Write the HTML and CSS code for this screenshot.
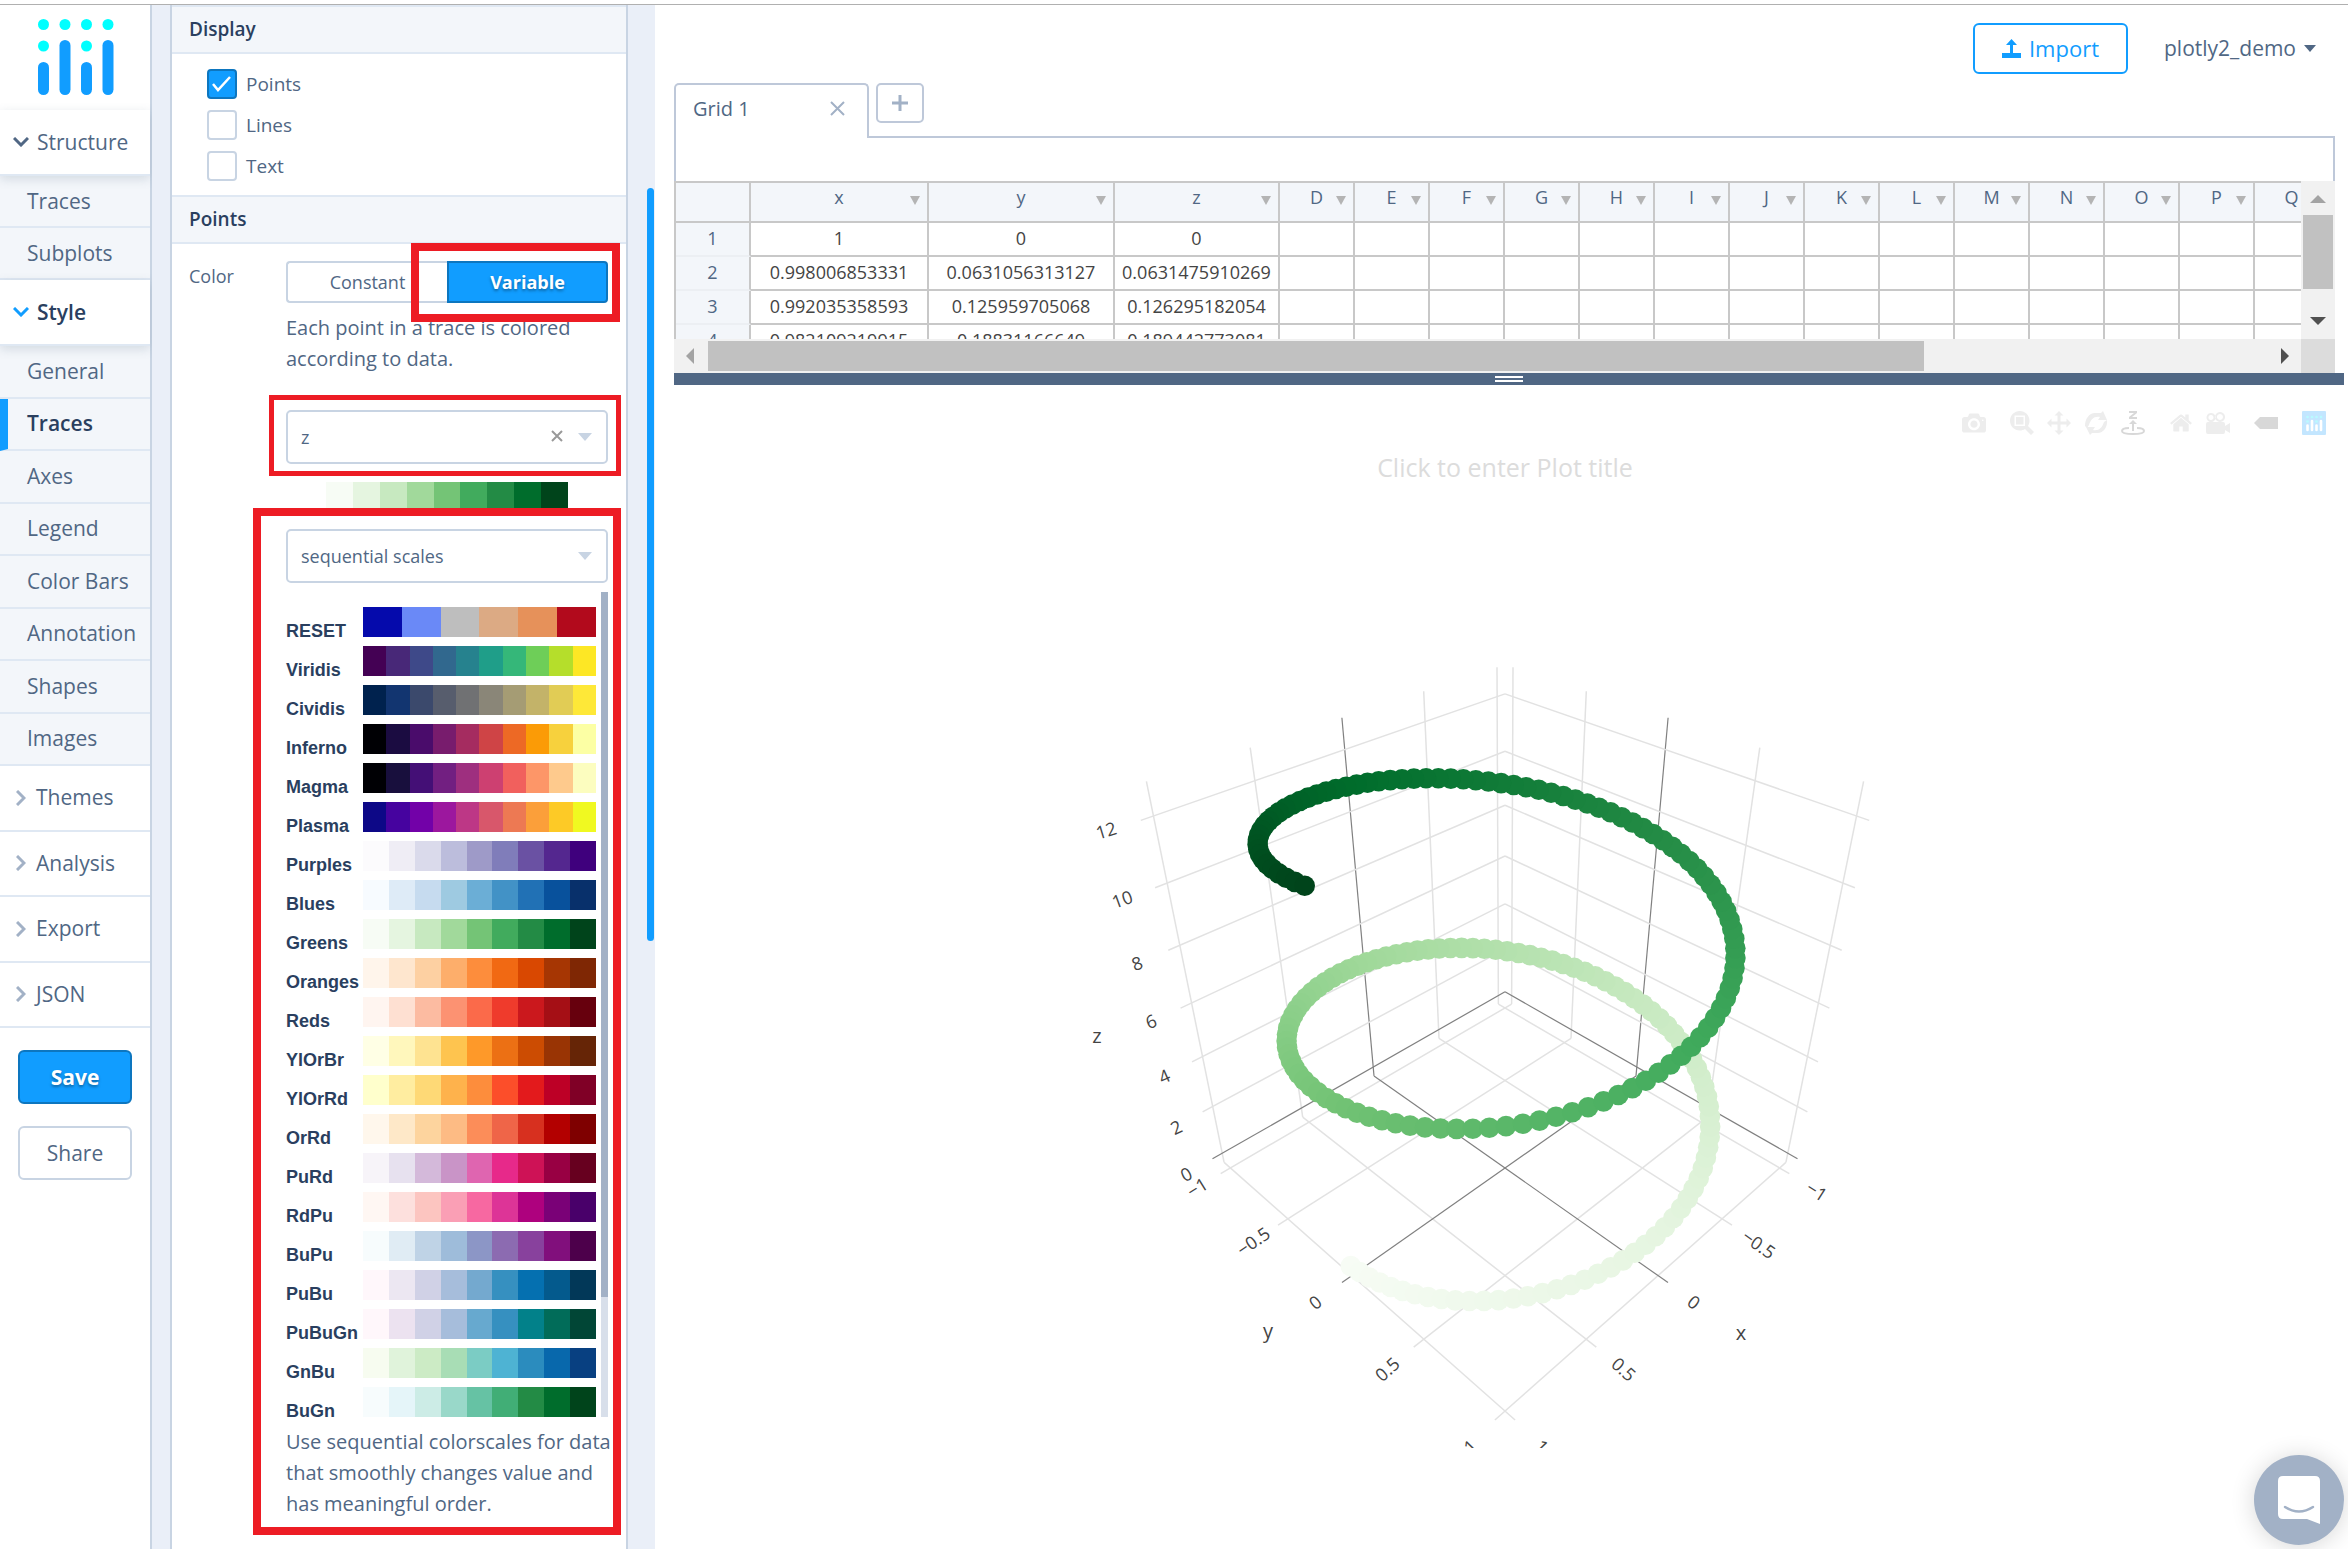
FILE: index.html
```html
<!DOCTYPE html>
<html lang="en">
<head>
<meta charset="utf-8">
<title>Chart Studio</title>
<link rel="stylesheet" href="styles.css">
</head>
<body>
<div class="app">
  <aside class="sidebar">
    <div class="logo">
      <svg width="76" height="76" viewBox="0 0 76 76" aria-label="Plotly">
        <g fill="#0ff"><circle cx="5.500" cy="5.500" r="5.500"/><circle cx="27" cy="5.500" r="5.500"/><circle cx="48.500" cy="5.500" r="5.500"/><circle cx="70" cy="5.500" r="5.500"/><circle cx="5.500" cy="27" r="5.500"/><circle cx="48.500" cy="27" r="5.500"/></g>
        <g fill="#119dff"><rect y="43" width="11" height="33" rx="5.500"/><rect x="21.500" y="21" width="11" height="55" rx="5.500"/><rect x="43" y="43" width="11" height="33" rx="5.500"/><rect x="64.500" y="21" width="11" height="55" rx="5.500"/></g>
      </svg>
    </div>
    <nav>
      <a class="group open" href="#structure"><svg width="16" height="10" viewBox="0 0 16 10"><path d="M1 1l7 7 7-7"/></svg>Structure</a>
      <div class="items two">
        <a href="#s-traces">Traces</a><a href="#subplots">Subplots</a>
      </div>
      <a class="group open active" href="#style"><svg width="16" height="10" viewBox="0 0 16 10"><path d="M1 1l7 7 7-7"/></svg>Style</a>
      <div class="items eight">
        <a href="#general">General</a><a class="current" href="#traces">Traces</a><a href="#axes">Axes</a><a href="#legend">Legend</a><a href="#colorbars">Color Bars</a><a href="#annotation">Annotation</a><a href="#shapes">Shapes</a><a href="#images">Images</a>
      </div>
      <div class="closed">
        <a class="group" href="#themes"><svg width="10" height="16" viewBox="0 0 10 16"><path d="M1 1l7 7-7 7"/></svg>Themes</a>
        <a class="group" href="#analysis"><svg width="10" height="16" viewBox="0 0 10 16"><path d="M1 1l7 7-7 7"/></svg>Analysis</a>
        <a class="group" href="#export"><svg width="10" height="16" viewBox="0 0 10 16"><path d="M1 1l7 7-7 7"/></svg>Export</a>
        <a class="group" href="#json"><svg width="10" height="16" viewBox="0 0 10 16"><path d="M1 1l7 7-7 7"/></svg>JSON</a>
      </div>
    </nav>
    <div class="actions">
      <button class="btn primary">Save</button>
      <button class="btn">Share</button>
    </div>
  </aside>

  <div class="panel-wrap">
    <section class="panel">
      <h2>Display</h2>
      <div class="checks">
        <label><input type="checkbox" checked>Points</label>
        <label><input type="checkbox">Lines</label>
        <label><input type="checkbox">Text</label>
      </div>
      <h2>Points</h2>
      <div class="field">
        <span class="field-name">Color</span>
        <div class="field-body">
          <div class="toggle">
            <button>Constant</button><button class="on">Variable</button>
            <div class="mark mark-toggle"></div>
          </div>
          <p class="help">Each point in a trace is colored according to data.</p>
          <div class="picker column-picker">
            <select aria-label="Color column"><option>z</option></select>
            <button class="clear" aria-label="Clear"><svg width="12" height="12" viewBox="0 0 12 12"><path d="M1 1l10 10M11 1L1 11" stroke="#999" stroke-width="2"/></svg></button>
            <div class="mark mark-column"></div>
          </div>
          <div class="swatches current-scale" data-scale="Greens"></div>
          <div class="scales">
            <div class="picker"><select aria-label="Scale type"><option>sequential scales</option></select></div>
            <div class="scale-list">
              <div class="scale-rows" id="scales"></div>
              <div class="scale-track"><div class="scale-thumb"></div></div>
            </div>
            <p class="help">Use sequential colorscales for data that smoothly changes value and has meaningful order.</p>
            <div class="mark mark-scales"></div>
          </div>
        </div>
      </div>
    </section>
    <div class="panel-thumb"></div>
  </div>

  <main>
    <header>
      <button class="import"><svg width="19" height="19" viewBox="0 0 19 19"><path d="M0 14h19v5H0zM8 14V6H4l5.500-6L15 6h-4v8z" fill="#119dff"/></svg>Import</button>
      <button class="user">plotly2_demo<svg width="12" height="7" viewBox="0 0 12 7"><path d="M0 0h12L6 7z" fill="#506784"/></svg></button>
    </header>
    <div class="tabs">
      <div class="tab"><span>Grid 1</span><button aria-label="Close tab"><svg width="15" height="15" viewBox="0 0 15 15"><path d="M1 1l13 13M14 1L1 14" stroke="#a2b1c6" stroke-width="2"/></svg></button></div>
      <button class="add" aria-label="Add tab"><svg width="16" height="16" viewBox="0 0 16 16"><path d="M8 0v16M0 8h16" stroke="#a2b1c6" stroke-width="3"/></svg></button>
    </div>
    <div class="formula"></div>
    <div class="grid">
      <div class="cells"><table>
        <thead><tr id="heads"><th class="num"></th></tr></thead>
        <tbody id="rows"></tbody>
      </table></div>
      <div class="vbar" aria-hidden="true">
        <svg width="16" height="8" viewBox="0 0 16 8"><path d="M0 8h16L8 0z" fill="#a3a3a3"/></svg>
        <div class="vthumb"></div>
        <svg width="16" height="8" viewBox="0 0 16 8"><path d="M0 0h16L8 8z" fill="#505050"/></svg>
      </div>
      <div class="hbar" aria-hidden="true">
        <svg width="8" height="16" viewBox="0 0 8 16"><path d="M8 0v16L0 8z" fill="#a3a3a3"/></svg>
        <div class="hrun"><div class="hthumb"></div></div>
        <svg width="8" height="16" viewBox="0 0 8 16"><path d="M0 0v16l8-8z" fill="#505050"/></svg>
      </div>
      <div class="corner"></div>
    </div>
    <div class="splitter"><span></span></div>
    <div class="plot">
      <svg id="scene" viewBox="674 385 1670 1063" role="img" aria-label="3D helix scatter plot"></svg>
      <div class="modebar">
        <a href="#camera"><svg viewBox="0 0 1000 1000"><path transform="matrix(1 0 0 -1 0 850)" d="m500 450c-83 0-150-67-150-150 0-83 67-150 150-150 83 0 150 67 150 150 0 83-67 150-150 150z m400 150h-120c-16 0-34 13-39 29l-31 93c-6 15-23 28-40 28h-340c-16 0-34-13-39-28l-31-94c-6-15-23-28-40-28h-120c-55 0-100-45-100-100v-450c0-55 45-100 100-100h800c55 0 100 45 100 100v450c0 55-45 100-100 100z m-400-550c-138 0-250 112-250 250 0 138 112 250 250 250 138 0 250-112 250-250 0-138-112-250-250-250z m365 380c-19 0-35 16-35 35 0 19 16 35 35 35 19 0 35-16 35-35 0-19-16-35-35-35z"/></svg></a>
        <div>
          <a href="#zoom"><svg viewBox="0 0 1000 1000"><path transform="matrix(1 0 0 -1 0 850)" d="m1000-25l-250 251c40 63 63 138 63 218 0 224-182 406-407 406-224 0-406-182-406-406s183-406 407-406c80 0 155 22 218 62l250-250 125 125z m-812 250l0 438 437 0 0-438-437 0z m62 375l313 0 0-312-313 0 0 312z"/></svg></a>
          <a href="#pan"><svg viewBox="0 0 1000 1000"><path transform="matrix(1 0 0 -1 0 850)" d="m1000 350l-187 188 0-125-250 0 0 250 125 0-188 187-187-187 125 0 0-250-250 0 0 125-188-188 186-187 0 125 252 0 0-250-125 0 187-188 188 188-125 0 0 250 250 0 0-126 187 188z"/></svg></a>
          <a href="#orbit"><svg viewBox="0 0 24 24"><path d="M1 15C1 8 5 2 11 2h6l2-2 4 9h-9l2-3c-6-1-9 2-11 8l-2 3zM23 9c1 7-4 13-9 13H8l-2 2-4-8h9l-2 3c6 1 9-2 11-8z"/></svg></a>
          <a class="on" href="#turntable"><svg viewBox="0 0 24 24"><path d="M8 0h8v2l-5 4h5v2H8V6l5-4H8zM12 9l4 4h-3v7h-2v-7H8z"/><path d="M8 17c-4 0-7 1-7 3s5 3 11 3 11-1 11-3-3-3-7-3" fill="none" stroke="#d8d8d8" stroke-width="2"/></svg></a>
        </div>
        <div>
          <a href="#home"><svg viewBox="0 0 929 1000"><path transform="matrix(1 0 0 -1 0 850)" d="m786 296v-267q0-15-11-26t-25-10h-214v214h-143v-214h-214q-15 0-25 10t-11 26v267q0 1 0 2t0 2l321 264 321-264q1-1 1-4z m124 39l-34-41q-5-5-12-6h-2q-7 0-12 3l-386 322-386-322q-7-4-13-4-7 2-12 7l-35 41q-4 5-3 13t6 12l401 334q18 15 42 15t43-15l136-114v109q0 8 5 13t13 5h107q8 0 13-5t5-13v-227l122-102q5-5 6-12t-4-13z"/></svg></a>
          <a href="#lastview"><svg viewBox="0 0 24 24"><path fill-rule="evenodd" d="M5 2a4.500 4.500 0 1 0 .1 0zM5 4a2.500 2.500 0 1 1-.1 0zM14 1a5 5 0 1 0 .1 0zM14 3a3 3 0 1 1-.1 0z"/><path d="M2 11h15q2 0 2 2v2l5-3v10l-5-3v2q0 2-2 2H2q-2 0-2-2v-8q0-2 2-2z"/></svg></a>
        </div>
        <a class="tag" href="#hover"><svg viewBox="0 0 24 24"><path d="M0 12l6-6h18v12H6z"/></svg></a>
        <a class="brand" href="#plotly"><svg viewBox="0 0 24 24"><rect width="24" height="24" rx="1" fill="#c3e6ff"/><g fill="#b8fbff"><circle cx="5.500" cy="6" r="1.300"/><circle cx="10" cy="6" r="1.300"/><circle cx="14.500" cy="6" r="1.300"/><circle cx="19" cy="6" r="1.300"/><circle cx="5.500" cy="10.500" r="1.300"/><circle cx="14.500" cy="10.500" r="1.300"/></g><path d="M5.500 14.500V19M10 10v9M14.500 14.500V19M19 10v9" stroke="#fff" stroke-width="2.600" stroke-linecap="round"/></svg></a>
      </div>
    </div>
  </main>
</div>
<button class="chat" aria-label="Open chat"><svg width="42" height="49" viewBox="0 0 42 49"><path d="M5 0h32q5 0 5 5v43l-13-5H5q-5 0-5-5V5q0-5 5-5z" fill="#fff"/><path d="M7 31q14 9 28 0" fill="none" stroke="#a2b1c6" stroke-width="2.500" stroke-linecap="round"/></svg></button>
<script src="script.js"></script>
</body>
</html>
```
FILE: styles.css
```css
* { box-sizing: border-box; }
body {
  margin: 0;
  height: 100vh;
  overflow: hidden;
  padding-top: 4px;
  background: #fff;
  color: #506784;
  font: 19px/31px "Open Sans", "Noto Sans", sans-serif;
}
button { font: inherit; color: inherit; margin: 0; padding: 0; border: 0; background: none; cursor: pointer; }
a { color: inherit; text-decoration: none; }
p, h2 { margin: 0; }
svg { display: block; }

.app { display: flex; height: 100%; border-top: 1px solid #b0b0b0; }

/* Sidebar */
.sidebar { flex: none; width: 152px; border-right: 2px solid #c8d4e3; font-size: 21px; }
.logo { height: 105px; padding: 14px 0 0 38px; }
.group {
  display: flex; align-items: center; gap: 8px;
  height: 66px; padding-left: 13px;
  border-bottom: 2px solid #dfe8f3;
}
.group svg { fill: none; stroke: #a2b1c6; stroke-width: 3; }
.group.open svg { stroke: #506784; }
.group.open { position: relative; box-shadow: 0 3px 10px rgba(80, 103, 132, .2); }
.group.active { color: #2a3f5f; font-weight: 600; }
.group.active svg { stroke: #119dff; }
.items { display: grid; grid-auto-rows: 1fr; background: #f3f6fa; }
.items.two { height: 104px; }
.items.eight { height: 420px; }
.items a { display: flex; align-items: center; padding-left: 27px; border-bottom: 2px solid #dfe8f3; }
.items .current { padding-left: 19px; border-left: 8px solid #119dff; color: #2a3f5f; font-weight: 600; }
.closed { display: grid; grid-auto-rows: 1fr; height: 262px; }
.closed .group { height: auto; gap: 10px; padding-left: 16px; }
.actions { display: grid; gap: 22px; padding: 22px 18px; }
.btn { height: 54px; border: 2px solid #c8d4e3; border-radius: 6px; font-weight: 500; }
.btn.primary { background: #119dff; border-color: #0d76bf; color: #fff; font-weight: 700; text-shadow: 0 2px 3px rgba(0, 0, 0, .35); }

/* Style panel */
.panel-wrap { flex: none; position: relative; width: 503px; padding: 0 27px 0 18px; background: #eaeff8; }
.panel { height: 100%; border: 2px solid #c8d4e3; border-width: 0 2px; background: #fff; }
.panel-thumb { position: absolute; top: 183px; right: 1px; width: 7px; height: 753px; border-radius: 4px; background: #119dff; }
h2 {
  height: 49px; padding-left: 17px;
  border: 2px solid #dfe8f3; border-width: 2px 0;
  background: #f3f6fa; color: #2a3f5f;
  font-size: 19px; font-weight: 600; line-height: 44px;
}
.checks { display: grid; gap: 11px; padding: 15px 35px 14px; }
.checks label { display: flex; align-items: center; gap: 9px; height: 30px; }
.checks input {
  appearance: none; width: 30px; height: 30px; margin: 0;
  border: 2px solid #c8d4e3; border-radius: 4px; background: #fff;
}
.checks input:checked {
  border-color: #0d76bf;
  background: #119dff url("data:image/svg+xml,%3Csvg xmlns='http://www.w3.org/2000/svg' width='20' height='18'%3E%3Cpath d='M1 9l5 6L18 2' fill='none' stroke='white' stroke-width='2.500'/%3E%3C/svg%3E") center / 20px 18px no-repeat;
}
.field { display: grid; grid-template-columns: 97px 1fr; padding: 17px 18px 0 17px; }
.field-name { font-size: 18px; }
.toggle { position: relative; display: grid; grid-template-columns: 1fr 1fr; height: 42px; font-size: 18px; }
.toggle button { border: 2px solid #c8d4e3; border-right: 0; border-radius: 4px 0 0 4px; }
.toggle .on {
  border: 2px solid #0d76bf; border-radius: 0 4px 4px 0;
  background: #119dff; color: #fff; font-weight: 700; text-shadow: 0 2px 3px rgba(0, 0, 0, .35);
}
.help { margin-right: -6px; padding-top: 9px; font-size: 20px; }
.picker { position: relative; height: 54px; }
.column-picker { margin-top: 36px; }
.picker select {
  appearance: none; width: 100%; height: 100%; padding: 0 13px;
  border: 2px solid #c8d4e3; border-radius: 5px; background: #fff;
  font: inherit; font-size: 18px; color: #506784;
}
.picker::after {
  content: ""; position: absolute; right: 16px; top: 23px;
  border: 7px solid transparent; border-top: 8px solid #c8d4e3; border-bottom: 0;
}
.clear { position: absolute; right: 45px; top: 20px; }
.mark { position: absolute; z-index: 2; border: 8px solid #ed1c24; pointer-events: none; }
.mark-toggle { inset: -18px -12px -19px 125px; }
.mark-column { inset: -15px -13px -12px -17px; border-width: 5px; }
.mark-scales { inset: -21px -13px -16px -33px; }
.swatches { display: flex; }
.swatches span { flex: 1; }
.current-scale { height: 27px; margin: 18px 40px 20px; }
.scales { position: relative; }
.scale-list { display: flex; gap: 5px; margin-top: 9px; height: 825px; }
.scale-rows { flex: 1; display: flex; flex-direction: column; gap: 9px; padding-top: 15px; }
.scale { display: grid; grid-template-columns: 77px 1fr; grid-template-rows: 30px; height: 30px; }
.scale b { padding-top: 9px; color: #2a3f5f; font: bold 18px/30px "Liberation Sans", sans-serif; }
.scale-track { width: 7px; background: #d8dfea; }
.scale-thumb { height: 705px; background: #a2b1c6; }

/* Workspace */
main { flex: 1; min-width: 0; padding: 0 4px 0 19px; display: flex; flex-direction: column; }
header { display: flex; justify-content: flex-end; gap: 36px; height: 78px; padding: 18px 28px 0 0; }
.import {
  display: flex; align-items: center; justify-content: center; gap: 8px;
  width: 155px; height: 51px; border: 2px solid #119dff; border-radius: 6px;
  color: #119dff; font-size: 22px;
}
.user { display: flex; align-items: center; gap: 8px; height: 51px; font-size: 21px; }
.tabs { display: flex; gap: 7px; height: 53px; }
.tab {
  position: relative; display: flex; align-items: center; justify-content: space-between;
  width: 195px; height: 55px; padding: 0 22px 6px 17px;
  border: 2px solid #bec8d9; border-bottom: 0; border-radius: 5px 5px 0 0; background: #fff;
  font-size: 20px;
}
.add { display: grid; place-items: center; width: 48px; height: 40px; border: 2px solid #bec8d9; border-radius: 5px; }
.formula { height: 45px; margin-right: 9px; border: 2px solid #bec8d9; border-bottom: 0; }
.grid { display: grid; grid-template-columns: 1fr 34px; grid-template-rows: 158px 34px; margin-right: 9px; }
.cells { overflow: hidden; border: 2px solid #c8c8c8; border-width: 2px 0 0 2px; }
table { table-layout: fixed; width: 1654px; border-collapse: separate; border-spacing: 0; font-size: 18px; line-height: 24px; text-align: center; color: #444; }
th, td { padding: 0; border: 2px solid #c8c8c8; border-width: 0 2px 2px 0; }
th { position: relative; width: 75px; height: 40px; padding-bottom: 10px; background: #f3f6fa; color: #506784; font-weight: 400; }
th.col-x { width: 178px; }
th.col-y { width: 186px; }
th.col-z { width: 165px; }
thead th:not(.num)::after {
  content: ""; position: absolute; right: 7px; top: 13px;
  border: 5px solid transparent; border-top: 9px solid #b4b4b4; border-bottom: 0;
}
td, tbody th { height: 34px; padding: 0 0 3px; }
tbody th { border-bottom-color: #eceff3; }
.vbar { display: flex; flex-direction: column; align-items: center; justify-content: space-between; padding: 14px 2px; background: #f1f1f1; }
.vthumb { width: 100%; height: 74px; margin-bottom: 16px; background: #c1c1c1; }
.hbar { display: flex; align-items: center; justify-content: space-between; padding: 0 12px; background: #f1f1f1; }
.hrun { flex: 1; padding: 0 14px; }
.hthumb { width: 78%; height: 30px; background: #c1c1c1; }
.corner { background: #dcdcdc; }
.splitter { display: grid; place-items: center; height: 12px; background: #506784; }
.splitter span { width: 28px; height: 6px; border: 2px solid #fff; border-width: 2px 0; }
.plot { position: relative; }
#scene { width: 100%; font-family: "Open Sans", "Noto Sans", sans-serif; }
.modebar { position: absolute; top: 26px; right: 18px; display: flex; gap: 24px; }
.modebar div { display: flex; gap: 13px; }
.modebar svg { width: 24px; height: 24px; fill: #ededed; }
.modebar .on svg, .modebar .tag svg { fill: #d8d8d8; }
.chat {
  position: fixed; right: 4px; bottom: 4px; width: 90px; height: 90px;
  display: grid; place-items: center; border-radius: 50%;
  background: #a2b1c6; box-shadow: 0 2px 24px rgba(0, 0, 0, .16);
}
```
FILE: script.js
```js
const scales = {
  RESET: '#050aac #6a89f7 #bebebe #dcaa84 #e6915a #b20a1c',
  Viridis: '#440154 #482878 #3e4989 #31688e #26828e #1f9e89 #35b779 #6ece58 #b5de2b #fde725',
  Cividis: '#00224e #123570 #3b496c #575d6d #707173 #8a8678 #a59c74 #c3b369 #e1cc55 #fee838',
  Inferno: '#000004 #1b0c41 #4a0c6b #781c6d #a52c60 #cf4446 #ed6925 #fb9b06 #f7d13d #fcffa4',
  Magma: '#000004 #180f3d #440f76 #721f81 #9e2f7f #cd4071 #f1605d #fd9668 #feca8d #fcfdbf',
  Plasma: '#0d0887 #46039f #7201a8 #9c179e #bd3786 #d8576b #ed7953 #fb9f3a #fdca26 #f0f921',
  Purples: '#fcfbfd #efedf5 #dadaeb #bcbddc #9e9ac8 #807dba #6a51a3 #54278f #3f007d',
  Blues: '#f7fbff #deebf7 #c6dbef #9ecae1 #6baed6 #4292c6 #2171b5 #08519c #08306b',
  Greens: '#f7fcf5 #e5f5e0 #c7e9c0 #a1d99b #74c476 #41ab5d #238b45 #006d2c #00441b',
  Oranges: '#fff5eb #fee6ce #fdd0a2 #fdae6b #fd8d3c #f16913 #d94801 #a63603 #7f2704',
  Reds: '#fff5f0 #fee0d2 #fcbba1 #fc9272 #fb6a4a #ef3b2c #cb181d #a50f15 #67000d',
  YlOrBr: '#ffffe5 #fff7bc #fee391 #fec44f #fe9929 #ec7014 #cc4c02 #993404 #662506',
  YlOrRd: '#ffffcc #ffeda0 #fed976 #feb24c #fd8d3c #fc4e2a #e31a1c #bd0026 #800026',
  OrRd: '#fff7ec #fee8c8 #fdd49e #fdbb84 #fc8d59 #ef6548 #d7301f #b30000 #7f0000',
  PuRd: '#f7f4f9 #e7e1ef #d4b9da #c994c7 #df65b0 #e7298a #ce1256 #980043 #67001f',
  RdPu: '#fff7f3 #fde0dd #fcc5c0 #fa9fb5 #f768a1 #dd3497 #ae017e #7a0177 #49006a',
  BuPu: '#f7fcfd #e0ecf4 #bfd3e6 #9ebcda #8c96c6 #8c6bb1 #88419d #810f7c #4d004b',
  PuBu: '#fff7fb #ece7f2 #d0d1e6 #a6bddb #74a9cf #3690c0 #0570b0 #045a8d #023858',
  PuBuGn: '#fff7fb #ece2f0 #d0d1e6 #a6bddb #67a9cf #3690c0 #02818a #016c59 #014636',
  GnBu: '#f7fcf0 #e0f3db #ccebc5 #a8ddb5 #7bccc4 #4eb3d3 #2b8cbe #0868ac #084081',
  BuGn: '#f7fcfd #e5f5f9 #ccece6 #99d8c9 #66c2a4 #41ae76 #238b45 #006d2c #00441b'
};
const cells = name => scales[name].split(' ').map(c => `<span style="background:${c}"></span>`).join('');
document.getElementById('scales').innerHTML = Object.keys(scales)
  .map(n => `<div class="scale"><b>${n}</b><div class="swatches">${cells(n)}</div></div>`).join('');
document.querySelector('[data-scale]').innerHTML = cells('Greens');

// Data grid
const columns = ['x', 'y', 'z', ...'DEFGHIJKLMNOPQ'];
document.getElementById('heads').innerHTML += columns.map(c => `<th class="col-${c}">${c}</th>`).join('');
const data = [
  ['1', '0', '0'],
  ['0.998006853331', '0.0631056313127', '0.0631475910269'],
  ['0.992035358593', '0.125959705068', '0.126295182054'],
  ['0.982109219915', '0.18831166649', '0.189442773081']
];
document.getElementById('rows').innerHTML = data
  .map((r, i) => `<tr><th>${i + 1}</th>${columns.map((c, j) => `<td>${r[j] || ''}</td>`).join('')}</tr>`).join('');

// Perspective projection of data coordinates onto the scene
const R = 1.058, Z0 = -0.41, Z1 = 12.97;
function project([x, y, z]) {
  const w = 1 - 0.103 * (x + y) - 0.0163 * (z - Z0);
  return [1505 + 137.3 * (y - x) / w, (1169 - 23.9 * (x + y) - 41.4 * (z - Z0)) / w - 1];
}
const parts = [];
function line(a, b, zero) {
  const [p, q] = [project(a), project(b)];
  parts.push(`<line x1="${p[0].toFixed(1)}" y1="${p[1].toFixed(1)}" x2="${q[0].toFixed(1)}" y2="${q[1].toFixed(1)}" stroke="${zero ? '#808080' : '#e2e2e2'}" stroke-width="${zero ? 1.2 : 1.5}"/>`);
}
[-1, -0.5, 0.5, 1, 0].forEach(t => {
  line([t, -R, Z0], [t, R, Z0], t === 0);
  line([-R, t, Z0], [R, t, Z0], t === 0);
  line([t, -R, Z0], [t, -R, Z1], t === 0);
  line([-R, t, Z0], [-R, t, Z1], t === 0);
});
for (let z = 12; z >= 0; z -= 2) {
  line([-R, -R, z], [R, -R, z], z === 0);
  line([-R, -R, z], [-R, R, z], z === 0);
}
const greens = scales.Greens.split(' ').map(h => [1, 3, 5].map(i => parseInt(h.slice(i, i + 2), 16)));
for (let i = 0; i < 200; i++) {
  const t = i * 4 * Math.PI / 199, f = i / 199 * 8, k = Math.min(7, Math.floor(f));
  const color = greens[k].map((v, c) => Math.round(v + (greens[k + 1][c] - v) * (f - k)));
  const [x, y] = project([Math.cos(t), Math.sin(t), t]);
  parts.push(`<circle cx="${x.toFixed(1)}" cy="${y.toFixed(1)}" r="10.3" fill="rgb(${color})"/>`);
}
const labels = [
  ['12', 1106, 830, -17], ['10', 1122, 899, -20], ['8', 1137, 963, -20], ['6', 1151, 1021, -22],
  ['4', 1164, 1076, -24], ['2', 1176, 1127, -26], ['0', 1186, 1174, -28],
  ['−1', 1197, 1187, -32], ['−0.5', 1253, 1241, -35], ['0', 1315, 1302, -38], ['0.5', 1387, 1369, -42], ['1', 1470, 1446, -46],
  ['−1', 1817, 1191, 32], ['−0.5', 1759, 1244, 35], ['0', 1694, 1302, 38], ['0.5', 1624, 1369, 42], ['1', 1542, 1446, 46]
];
labels.forEach(([s, x, y, a]) => parts.push(
  `<text x="${x}" y="${y}" transform="rotate(${a} ${x} ${y})" dy="7" font-size="18" fill="#444" text-anchor="middle">${s}</text>`));
[['z', 1097, 1043], ['y', 1268, 1338], ['x', 1741, 1340]].forEach(([s, x, y]) => parts.push(
  `<text x="${x}" y="${y}" font-size="20" fill="#444" text-anchor="middle">${s}</text>`));
parts.push('<text x="1505" y="477" font-size="25" fill="#dcdcdc" text-anchor="middle">Click to enter Plot title</text>');
document.getElementById('scene').innerHTML = parts.join('');
```
